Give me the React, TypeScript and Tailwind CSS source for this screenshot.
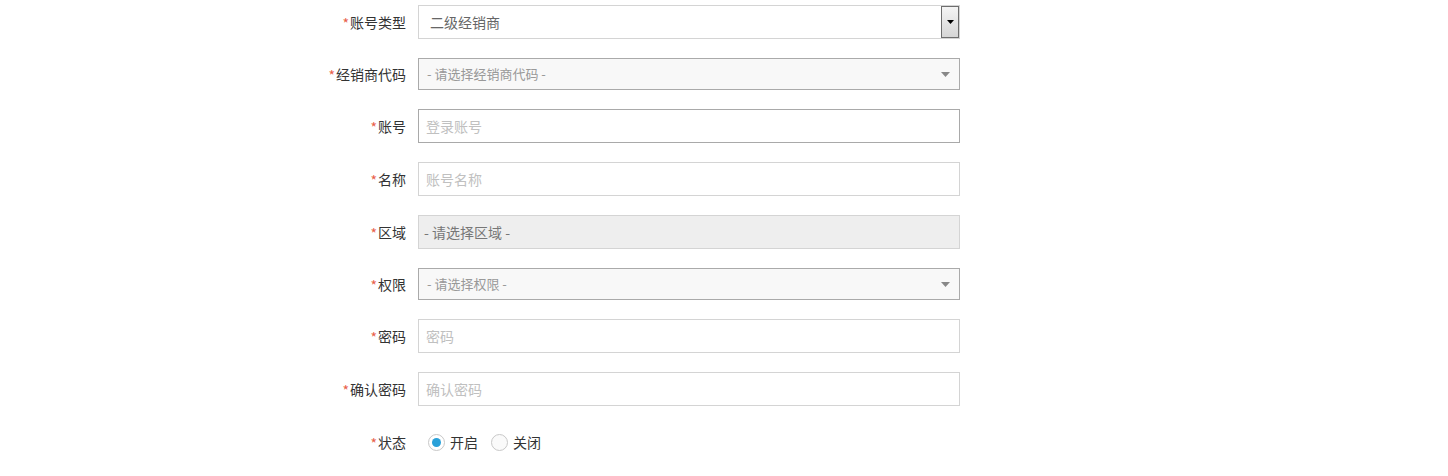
import React from "react";

const font = { fontFamily: '"Noto Sans CJK SC", "Noto Sans", sans-serif' };

function Label({ text }: { text: string }) {
  return (
    <div className="w-[406px] shrink-0 text-right text-[14px] text-[#333] leading-none">
      <span className="text-[#e8604a] mr-[1px] relative top-[1px]">*</span>
      {text}
    </div>
  );
}

function Arrow({ color }: { color: string }) {
  return (
    <svg width="9" height="5" viewBox="0 0 9 5">
      <polygon points="0,0 9,0 4.5,5" fill={color} />
    </svg>
  );
}

export default function App() {
  return (
    <div className="w-[1448px] h-[476px] bg-white pt-[5px]" style={font}>
      {/* 账号类型 */}
      <div className="flex items-center gap-[12px] mb-[19px]">
        <Label text="账号类型" />
        <div className="relative w-[542px] h-[34px] border border-[#d4d4d4] bg-white flex items-center pl-[11px] text-[14px] text-[#666]">
          二级经销商
          <div className="absolute right-0 top-0 bottom-0 w-[18px] border border-[#6e6e6e] bg-gradient-to-b from-[#f4f4f4] to-[#d6d6d6] flex items-center justify-center">
            <svg width="7" height="4" viewBox="0 0 7 4">
              <polygon points="0,0 7,0 3.5,4" fill="#000" />
            </svg>
          </div>
        </div>
      </div>

      {/* 经销商代码 */}
      <div className="flex items-center gap-[12px] mb-[19px]">
        <Label text="经销商代码" />
        <div className="w-[542px] h-[32px] border border-[#aaaaaa] bg-[#f8f8f8] flex items-center justify-between pl-[8px] pr-[9px] text-[13px] text-[#999]">
          <span>- 请选择经销商代码 -</span>
          <Arrow color="#888" />
        </div>
      </div>

      {/* 账号 */}
      <div className="flex items-center gap-[12px] mb-[19px]">
        <Label text="账号" />
        <div className="w-[542px] h-[34px] border border-[#a9a9a9] bg-white flex items-center pl-[7px] text-[14px] text-[#c0c0c0]">
          登录账号
        </div>
      </div>

      {/* 名称 */}
      <div className="flex items-center gap-[12px] mb-[19px]">
        <Label text="名称" />
        <div className="w-[542px] h-[34px] border border-[#d4d4d4] bg-white flex items-center pl-[7px] text-[14px] text-[#c0c0c0]">
          账号名称
        </div>
      </div>

      {/* 区域 */}
      <div className="flex items-center gap-[12px] mb-[19px]">
        <Label text="区域" />
        <div className="w-[542px] h-[34px] border border-[#d4d4d4] bg-[#eeeeee] flex items-center pl-[5px] text-[14px] text-[#777]">
          - 请选择区域 -
        </div>
      </div>

      {/* 权限 */}
      <div className="flex items-center gap-[12px] mb-[19px]">
        <Label text="权限" />
        <div className="w-[542px] h-[32px] border border-[#aaaaaa] bg-[#f8f8f8] flex items-center justify-between pl-[8px] pr-[9px] text-[13px] text-[#999]">
          <span>- 请选择权限 -</span>
          <Arrow color="#888" />
        </div>
      </div>

      {/* 密码 */}
      <div className="flex items-center gap-[12px] mb-[19px]">
        <Label text="密码" />
        <div className="w-[542px] h-[34px] border border-[#d4d4d4] bg-white flex items-center pl-[7px] text-[14px] text-[#c0c0c0]">
          密码
        </div>
      </div>

      {/* 确认密码 */}
      <div className="flex items-center gap-[12px] mb-[19px]">
        <Label text="确认密码" />
        <div className="w-[542px] h-[34px] border border-[#d4d4d4] bg-white flex items-center pl-[7px] text-[14px] text-[#c0c0c0]">
          确认密码
        </div>
      </div>

      {/* 状态 */}
      <div className="flex items-center gap-[12px] h-[34px]">
        <Label text="状态" />
        <div className="flex items-center text-[14px] text-[#333] pl-[10px]">
          <span className="w-[17px] h-[17px] rounded-full border border-[#c8c8c8] bg-white flex items-center justify-center">
            <span className="w-[9px] h-[9px] rounded-full bg-[#2aa1d9]" />
          </span>
          <span className="ml-[5px]">开启</span>
          <span className="ml-[13px] w-[17px] h-[17px] rounded-full border border-[#c8c8c8] bg-[#fafafa]" />
          <span className="ml-[5px]">关闭</span>
        </div>
      </div>
    </div>
  );
}
